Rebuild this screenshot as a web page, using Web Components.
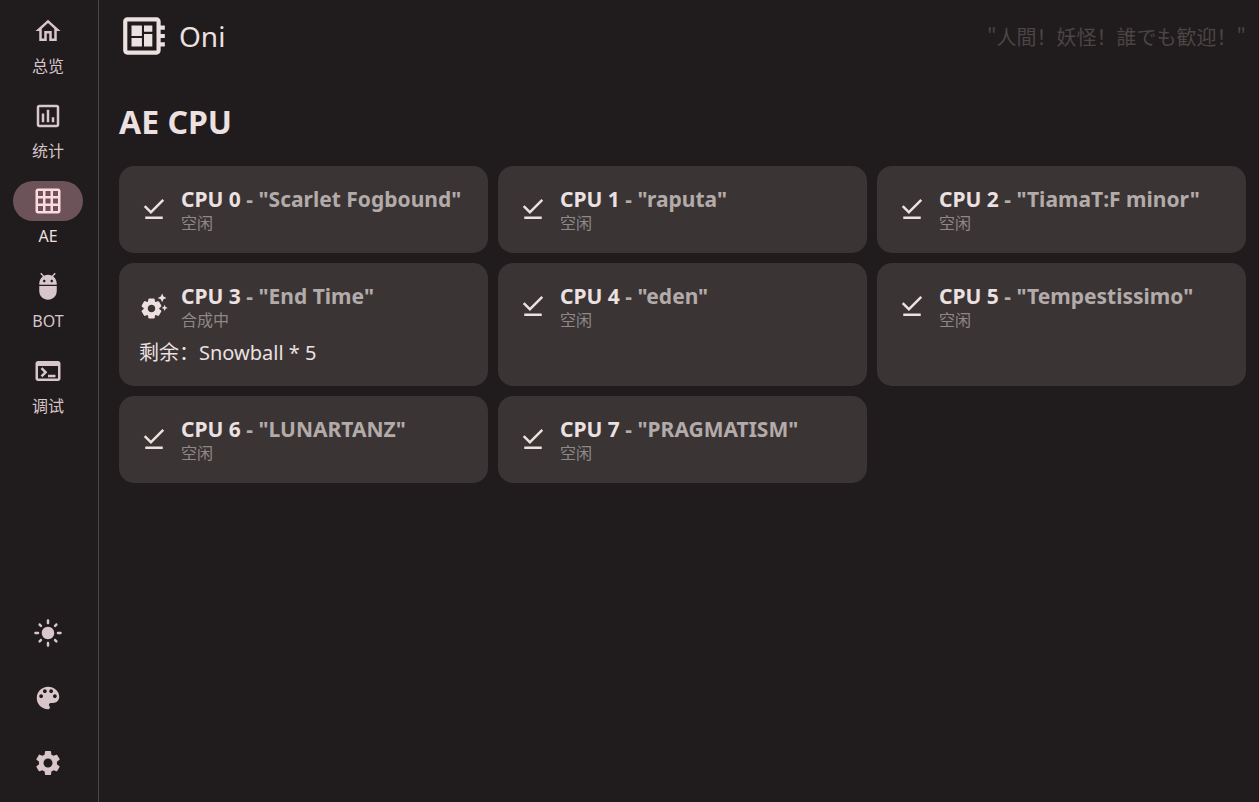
<!DOCTYPE html>
<html lang="zh-CN">
<head>
<meta charset="utf-8">
<meta name="viewport" content="width=device-width, initial-scale=1">
<title>Oni</title>
<style>
  html, body { margin: 0; height: 100%; }
  body {
    --surface: #201b1c;
    --card: #3a3434;
    --line: #4c4546;
    --text: #ece0e0;
    --nav: #d8c6ca;
    --pill: #6c535a;
    --pill-icon: #ffd9e2;
    background: var(--surface);
    color: var(--text);
    font-family: "Noto Sans", "Noto Sans CJK SC", sans-serif;
    font-size: 20px;
  }
</style>
</head>
<body>
<oni-app>
  <oni-nav slot="nav">
    <nav-item icon="home" href="#home">总览</nav-item>
    <nav-item icon="chart" href="#stats">统计</nav-item>
    <nav-item icon="grid" href="#ae" active>AE</nav-item>
    <nav-item icon="bot" href="#bot">BOT</nav-item>
    <nav-item icon="terminal" href="#debug">调试</nav-item>
    <nav-action slot="actions" icon="sun" label="主题"></nav-action>
    <nav-action slot="actions" icon="palette" label="配色"></nav-action>
    <nav-action slot="actions" icon="settings" label="设置"></nav-action>
  </oni-nav>
  <oni-header name="Oni">"人間！妖怪！誰でも歓迎！"</oni-header>
  <cpu-grid heading="AE CPU">
    <cpu-card cpu="CPU 0" name="Scarlet Fogbound" state="空闲" icon="done"></cpu-card>
    <cpu-card cpu="CPU 1" name="raputa" state="空闲" icon="done"></cpu-card>
    <cpu-card cpu="CPU 2" name="TiamaT:F minor" state="空闲" icon="done"></cpu-card>
    <cpu-card cpu="CPU 3" name="End Time" state="合成中" icon="busy">剩余：Snowball * 5</cpu-card>
    <cpu-card cpu="CPU 4" name="eden" state="空闲" icon="done"></cpu-card>
    <cpu-card cpu="CPU 5" name="Tempestissimo" state="空闲" icon="done"></cpu-card>
    <cpu-card cpu="CPU 6" name="LUNARTANZ" state="空闲" icon="done"></cpu-card>
    <cpu-card cpu="CPU 7" name="PRAGMATISM" state="空闲" icon="done"></cpu-card>
  </cpu-grid>
</oni-app>
<script>
const ICONS = {
  home: 'M12 5.69l5 4.5V18h-2v-6H9v6H7v-7.81l5-4.5M12 3L2 12h3v8h6v-6h2v6h6v-8h3L12 3z',
  chart: 'M9 17H7v-7h2v7zm4 0h-2V7h2v10zm4 0h-2v-4h2v4zm2 2H5V5h14v14zm0-16H5c-1.1 0-2 .9-2 2v14c0 1.1.9 2 2 2h14c1.1 0 2-.9 2-2V5c0-1.1-.9-2-2-2z',
  grid: 'M20 2H4c-1.1 0-2 .9-2 2v16c0 1.1.9 2 2 2h16c1.1 0 2-.9 2-2V4c0-1.1-.9-2-2-2zM8 20H4v-4h4v4zm0-6H4v-4h4v4zm0-6H4V4h4v4zm6 12h-4v-4h4v4zm0-6h-4v-4h4v4zm0-6h-4V4h4v4zm6 12h-4v-4h4v4zm0-6h-4v-4h4v4zm0-6h-4V4h4v4z',
  bot: 'M5 16c0 3.87 3.13 7 7 7s7-3.13 7-7v-4H5v4zM16.12 4.37l2.1-2.1-.82-.83-2.3 2.31C14.16 3.28 13.12 3 12 3s-2.16.28-3.09.75L6.6 1.44l-.82.83 2.1 2.1C6.14 5.64 5 7.68 5 10v1h14v-1c0-2.32-1.14-4.37-2.88-5.63zM9 9c-.55 0-1-.45-1-1s.45-1 1-1 1 .45 1 1-.45 1-1 1zm6 0c-.55 0-1-.45-1-1s.45-1 1-1 1 .45 1 1-.45 1-1 1z',
  terminal: 'M20 4H4c-1.11 0-2 .9-2 2v12c0 1.1.89 2 2 2h16c1.1 0 2-.9 2-2V6c0-1.1-.89-2-2-2zm0 14H4V8h16v10zm-2-1h-6v-2h6v2zM7.5 17l-1.41-1.41L8.67 13l-2.59-2.59L7.5 9l4 4-4 4z',
  sun: 'M12 7c-2.76 0-5 2.24-5 5s2.24 5 5 5 5-2.24 5-5-2.24-5-5-5zM2 13h2c.55 0 1-.45 1-1s-.45-1-1-1H2c-.55 0-1 .45-1 1s.45 1 1 1zm18 0h2c.55 0 1-.45 1-1s-.45-1-1-1h-2c-.55 0-1 .45-1 1s.45 1 1 1zM11 2v2c0 .55.45 1 1 1s1-.45 1-1V2c0-.55-.45-1-1-1s-1 .45-1 1zm0 18v2c0 .55.45 1 1 1s1-.45 1-1v-2c0-.55-.45-1-1-1s-1 .45-1 1zM5.99 4.58c-.39-.39-1.03-.39-1.41 0-.39.39-.39 1.03 0 1.41l1.06 1.06c.39.39 1.03.39 1.41 0s.39-1.03 0-1.41L5.99 4.58zm12.37 12.37c-.39-.39-1.03-.39-1.41 0-.39.39-.39 1.03 0 1.41l1.06 1.06c.39.39 1.03.39 1.41 0 .39-.39.39-1.03 0-1.41l-1.06-1.06zm1.06-10.96c.39-.39.39-1.03 0-1.41-.39-.39-1.03-.39-1.41 0l-1.06 1.06c-.39.39-.39 1.03 0 1.41s1.03.39 1.41 0l1.06-1.06zM7.05 18.36c.39-.39.39-1.03 0-1.41-.39-.39-1.03-.39-1.41 0l-1.06 1.06c-.39.39-.39 1.03 0 1.41s1.03.39 1.41 0l1.06-1.06z',
  palette: 'M12 3c-4.97 0-9 4.03-9 9s4.03 9 9 9c.83 0 1.5-.67 1.5-1.5 0-.39-.15-.74-.39-1.01-.23-.26-.38-.61-.38-.99 0-.83.67-1.5 1.5-1.5H16c2.76 0 5-2.24 5-5 0-4.42-4.03-8-9-8zm-5.5 9c-.83 0-1.5-.67-1.5-1.5S5.67 9 6.5 9 8 9.67 8 10.5 7.33 12 6.5 12zm3-4C8.67 8 8 7.33 8 6.5S8.67 5 9.5 5s1.5.67 1.5 1.5S10.33 8 9.5 8zm5 0c-.83 0-1.5-.67-1.5-1.5S13.67 5 14.5 5s1.5.67 1.5 1.5S15.33 8 14.5 8zm3 4c-.83 0-1.5-.67-1.5-1.5S16.67 9 17.5 9s1.5.67 1.5 1.5-.67 1.5-1.5 1.5z',
  settings: 'M19.14 12.94c.04-.3.06-.61.06-.94 0-.32-.02-.64-.07-.94l2.03-1.58c.18-.14.23-.41.12-.61l-1.92-3.32c-.12-.22-.37-.29-.59-.22l-2.39.96c-.5-.38-1.03-.7-1.62-.94l-.36-2.54c-.04-.24-.24-.41-.48-.41h-3.84c-.24 0-.43.17-.47.41l-.36 2.54c-.59.24-1.13.57-1.62.94l-2.39-.96c-.22-.08-.47 0-.59.22L2.74 8.87c-.12.21-.08.47.12.61l2.03 1.58c-.05.3-.09.63-.09.94s.02.64.07.94l-2.03 1.58c-.18.14-.23.41-.12.61l1.92 3.32c.12.22.37.29.59.22l2.39-.96c.5.38 1.03.7 1.62.94l.36 2.54c.05.24.24.41.48.41h3.84c.24 0 .44-.17.47-.41l.36-2.54c.59-.24 1.13-.56 1.62-.94l2.39.96c.22.08.47 0 .59-.22l1.92-3.32c.12-.22.07-.47-.12-.61l-2.01-1.58zM12 15.6c-1.98 0-3.6-1.62-3.6-3.6s1.62-3.6 3.6-3.6 3.6 1.62 3.6 3.6-1.62 3.6-3.6 3.6z',
  board: 'M22 9V7h-2V5c0-1.1-.9-2-2-2H4c-1.1 0-2 .9-2 2v14c0 1.1.9 2 2 2h14c1.1 0 2-.9 2-2v-2h2v-2h-2v-2h2v-2h-2V9h2zm-4 10H4V5h14v14zM6 13h5v4H6v-4zm6-6h4v3h-4V7zM6 7h5v5H6V7zm6 4h4v6h-4v-6z',
  done: 'M20.13 5.41L18.72 4l-9.19 9.19-4.25-4.25-1.41 1.41 5.66 5.66 10.6-10.6zM5 18h14v2H5v-2z',
  busy: 'M17.41 6.59L15 5.5l2.41-1.09L18.5 2l1.09 2.41L22 5.5l-2.41 1.09L18.5 9l-1.09-2.41zM21.28 12.72L20.5 11l-.78 1.72-1.72.78 1.72.78.78 1.72.78-1.72L23 13.5l-1.72-.78zM16.24 14.37l1.23.93c.4.3.51.86.26 1.3l-1.62 2.8c-.25.44-.79.62-1.25.42l-1.43-.6c-.2.13-.42.26-.64.37l-.19 1.54c-.06.5-.49.88-.99.88H8.38c-.5 0-.93-.38-.99-.88l-.19-1.54c-.22-.11-.43-.23-.64-.37l-1.43.6c-.46.2-1 .02-1.25-.42l-1.62-2.8c-.25-.44-.14-1 .26-1.3l1.23-.93V14c0-.12 0-.25.01-.37L2.53 12.7c-.4-.3-.51-.86-.26-1.3l1.62-2.8c.25-.44.79-.62 1.25-.42l1.43.6c.2-.13.42-.26.64-.37l.19-1.54c.05-.49.48-.87.98-.87h3.23c.5 0 .93.38.99.88l.19 1.54c.22.11.43.23.64.37l1.43-.6c.46-.2 1-.02 1.25.42l1.62 2.8c.25.44.14 1-.26 1.3l-1.23.93c.01.12.01.24.01.37s0 .24-.01.36zM13 14c0-1.66-1.34-3-3-3s-3 1.34-3 3 1.34 3 3 3 3-1.34 3-3z'
};

class OniElement extends HTMLElement {
  connectedCallback() {
    if (this.shadowRoot) return;
    this.attachShadow({ mode: 'open' }).innerHTML = this.render();
  }
  attr(name) { return this.getAttribute(name) || ''; }
}

customElements.define('oni-icon', class extends OniElement {
  render() {
    return `<style>
      :host { display: block; flex: none; width: var(--icon-size, 30px); height: var(--icon-size, 30px); }
      svg { display: block; width: 100%; height: 100%; fill: currentColor; }
    </style>
    <svg viewBox="0 0 24 24" aria-hidden="true"><path d="${ICONS[this.attr('name')]}"/></svg>`;
  }
});

customElements.define('nav-item', class extends OniElement {
  render() {
    return `<style>
      :host { display: block; }
      a { display: flex; flex-direction: column; align-items: center; gap: 3px; color: var(--nav); text-decoration: none; font-size: 16px; line-height: 24px; }
      .pill { display: flex; align-items: center; justify-content: center; width: 70px; height: 40px; border-radius: 20px; }
      :host([active]) a { color: var(--text); }
      :host([active]) .pill { background: var(--pill); color: var(--pill-icon); }
    </style>
    <a href="${this.attr('href')}"><span class="pill"><oni-icon name="${this.attr('icon')}"></oni-icon></span><slot></slot></a>`;
  }
});

customElements.define('nav-action', class extends OniElement {
  render() {
    return `<style>
      :host { display: block; }
      button { display: flex; align-items: center; justify-content: center; width: 50px; height: 50px; padding: 0; border: 0; border-radius: 50%; background: none; color: var(--nav); cursor: pointer; }
    </style>
    <button type="button" aria-label="${this.attr('label')}"><oni-icon name="${this.attr('icon')}"></oni-icon></button>`;
  }
});

customElements.define('oni-nav', class extends OniElement {
  render() {
    return `<style>
      :host { display: flex; box-sizing: border-box; padding: 11px 2px 14px 0; border-right: 1px solid var(--line); }
      nav { flex: 1; display: flex; flex-direction: column; justify-content: space-between; }
      .items { display: flex; flex-direction: column; gap: 18px; }
      .actions { display: flex; flex-direction: column; align-items: center; gap: 15px; }
    </style>
    <nav><div class="items"><slot></slot></div><div class="actions"><slot name="actions"></slot></div></nav>`;
  }
});

customElements.define('oni-header', class extends OniElement {
  render() {
    return `<style>
      :host { display: flex; align-items: center; justify-content: space-between; }
      .brand { display: flex; align-items: center; gap: 10px; --icon-size: 50px; font-size: 28px; line-height: 50px; }
      q { quotes: none; font-family: "Noto Sans CJK SC", sans-serif; color: #4b4546; line-height: 30px; padding-top: 2px; }
    </style>
    <div class="brand"><oni-icon name="board"></oni-icon><span>${this.attr('name')}</span></div>
    <q><slot></slot></q>`;
  }
});

customElements.define('cpu-grid', class extends OniElement {
  render() {
    return `<style>
      :host { display: block; }
      h1 { margin: 0; font-size: 32px; line-height: 45px; font-weight: 700; }
      .grid { display: grid; grid-template-columns: repeat(3, minmax(0, 1fr)); gap: 10px; margin-top: 22px; }
    </style>
    <h1>${this.attr('heading')}</h1>
    <div class="grid"><slot></slot></div>`;
  }
});

customElements.define('cpu-card', class extends OniElement {
  render() {
    return `<style>
      :host { display: block; box-sizing: border-box; padding: 20px; border-radius: 15px; background: var(--card); }
      .head { display: flex; align-items: flex-start; gap: 12px; }
      oni-icon { margin: 8px 0; }
      h2 { margin: 0; font-size: 21px; line-height: 27px; font-weight: 700; white-space: nowrap; }
      h2 span { color: #b3abaa; }
      p { margin: 0; font-size: 16px; line-height: 20px; color: #8f8887; }
      .detail { margin-top: 10px; line-height: 26px; }
    </style>
    <div class="head"><oni-icon name="${this.attr('icon')}"></oni-icon>
      <div><h2>${this.attr('cpu')} <span>- "${this.attr('name')}"</span></h2><p>${this.attr('state')}</p></div></div>
    ${this.textContent.trim() ? '<div class="detail"><slot></slot></div>' : ''}`;
  }
});

customElements.define('oni-app', class extends OniElement {
  render() {
    return `<style>
      :host { display: grid; grid-template-columns: 99px 1fr; min-height: 100vh; }
      main { display: flex; flex-direction: column; gap: 38px; padding: 11px 13px 20px 20px; }
      slot[name=nav] { display: contents; }
    </style>
    <slot name="nav"></slot>
    <main><slot></slot></main>`;
  }
});
</script>
</body>
</html>
